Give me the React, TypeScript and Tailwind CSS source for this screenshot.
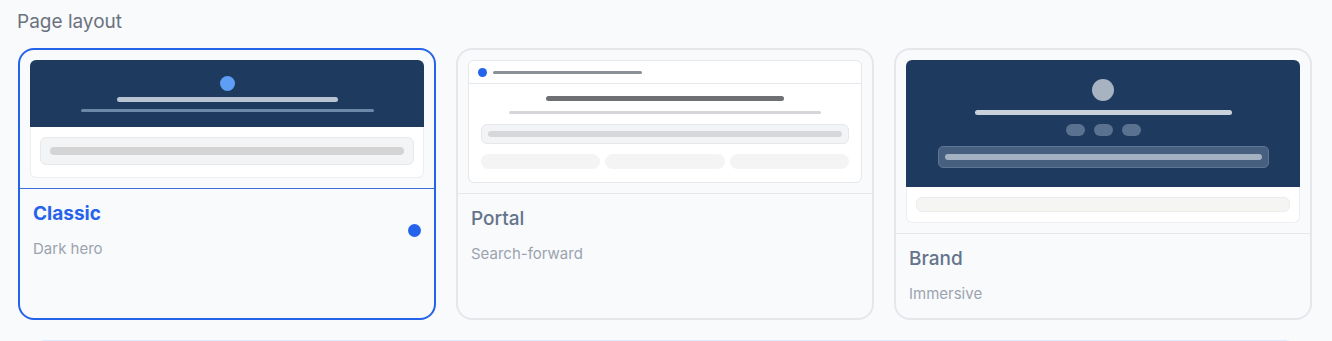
import { ReactNode } from "react";

type Layout = {
  id: string;
  name: string;
  hint: string;
  preview: ReactNode;
};

function ClassicPreview() {
  return (
    <div>
      <div className="flex flex-col items-center rounded-t-md bg-[#1e3a5f] pt-4 pb-[15px]">
        <div className="h-[15px] w-[15px] rounded-full bg-[#5e9ef7]" />
        <div className="mt-1.5 h-[5px] w-[221px] rounded-full bg-[#b8c4d2]" />
        <div className="mt-[7px] h-[3px] w-[293px] rounded-full bg-[#6b88a8]" />
      </div>
      <div className="rounded-b-md border-x border-b border-[#eceef1] bg-white px-[9px] pt-2.5 pb-3">
        <div className="rounded-md border border-[#e8e9eb] bg-[#f3f4f6] p-[9px]">
          <div className="h-2 rounded-full bg-[#d4d4d5]" />
        </div>
      </div>
    </div>
  );
}

function PortalPreview() {
  return (
    <div className="rounded-md border border-[#e5e7eb] bg-white">
      <div className="flex h-[23px] items-center gap-1.5 border-b border-[#e5e7eb] pl-[9px]">
        <div className="h-[9px] w-[9px] rounded-full bg-[#2563eb]" />
        <div className="h-[3px] w-[149px] rounded-full bg-[#8b8f96]" />
      </div>
      <div className="flex flex-col items-center px-3 pt-3 pb-[13px]">
        <div className="h-[5px] w-[238px] rounded-full bg-[#6e7074]" />
        <div className="mt-2.5 h-[3px] w-[312px] rounded-full bg-[#d4d6d9]" />
        <div className="mt-2.5 w-full rounded-md border border-[#e5e7eb] bg-[#f3f4f6] px-1.5 py-[6px]">
          <div className="h-[6px] rounded-full bg-[#d5d7da]" />
        </div>
        <div className="mt-2.5 grid w-full grid-cols-3 gap-[5px]">
          <div className="h-[15px] rounded-full bg-[#f4f4f5]" />
          <div className="h-[15px] rounded-full bg-[#f4f4f5]" />
          <div className="h-[15px] rounded-full bg-[#f4f4f5]" />
        </div>
      </div>
    </div>
  );
}

function BrandPreview() {
  return (
    <div>
      <div className="flex flex-col items-center rounded-t-md bg-[#1e3a5f] pt-[19px] pb-[19px]">
        <div className="h-[22px] w-[22px] rounded-full bg-[#a8b3c2]" />
        <div className="mt-[9px] h-[5px] w-[257px] rounded-full bg-[#c9d1dc]" />
        <div className="mt-[9px] flex gap-[9px]">
          <div className="h-3 w-[19px] rounded-full bg-[#5a7190]" />
          <div className="h-3 w-[19px] rounded-full bg-[#5a7190]" />
          <div className="h-3 w-[19px] rounded-full bg-[#5a7190]" />
        </div>
        <div className="mt-2.5 w-[331px] rounded-[5px] border border-[#5d7595] bg-[#47607f] px-1.5 py-[7px]">
          <div className="h-[6px] rounded-full bg-[#a4b1c3]" />
        </div>
      </div>
      <div className="rounded-b-md border-x border-b border-[#eceef1] bg-white px-[9px] pt-2.5 pb-2.5">
        <div className="h-[15px] rounded-md border border-[#ededec] bg-[#f5f5f4]" />
      </div>
    </div>
  );
}

const layouts: Layout[] = [
  { id: "classic", name: "Classic", hint: "Dark hero", preview: <ClassicPreview /> },
  { id: "portal", name: "Portal", hint: "Search-forward", preview: <PortalPreview /> },
  { id: "brand", name: "Brand", hint: "Immersive", preview: <BrandPreview /> },
];

function LayoutCard({ layout, active }: { layout: Layout; active: boolean }) {
  return (
    <button
      className={
        active
          ? "flex flex-col rounded-2xl border-2 border-[#2563eb] text-left"
          : "flex flex-col rounded-2xl border-2 border-[#e5e7eb] text-left"
      }
    >
      <div
        className={
          active
            ? "w-full border-b border-[#3b6fd8] p-2.5"
            : "w-full border-b border-[#e5e7eb] p-2.5"
        }
      >
        {layout.preview}
      </div>
      <div className="w-full flex-1 pt-3 pr-[13px] pb-3.5 pl-[13px]">
        <div className="flex items-center justify-between">
          <div>
            <div
              className={
                active
                  ? "text-[19px] leading-[26px] font-bold text-[#2563eb]"
                  : "text-[19px] leading-[26px] font-medium text-[#64748b]"
              }
            >
              {layout.name}
            </div>
            <div className="mt-3 text-[15px] leading-5 text-[#9ca3af]">{layout.hint}</div>
          </div>
          {active && <div className="h-[13px] w-[13px] rounded-full bg-[#2563eb]" />}
        </div>
      </div>
    </button>
  );
}

export default function App() {
  return (
    <div
      className="min-h-[341px] overflow-hidden bg-[#f8fafc] pt-2 pr-5 pl-[18px]"
      style={{ fontFamily: "Inter, 'Noto Sans', sans-serif" }}
    >
      <h2 className="-ml-px mb-3 text-[19px] leading-7 text-[#6b7280]">Page layout</h2>
      <div className="grid grid-cols-3 gap-5">
        {layouts.map((l) => (
          <LayoutCard key={l.id} layout={l} active={l.id === "classic"} />
        ))}
      </div>
      <div className="mx-[15px] mt-5 h-10 rounded-xl border border-[#dbeafe] bg-[#f3f8fe]" />
    </div>
  );
}
